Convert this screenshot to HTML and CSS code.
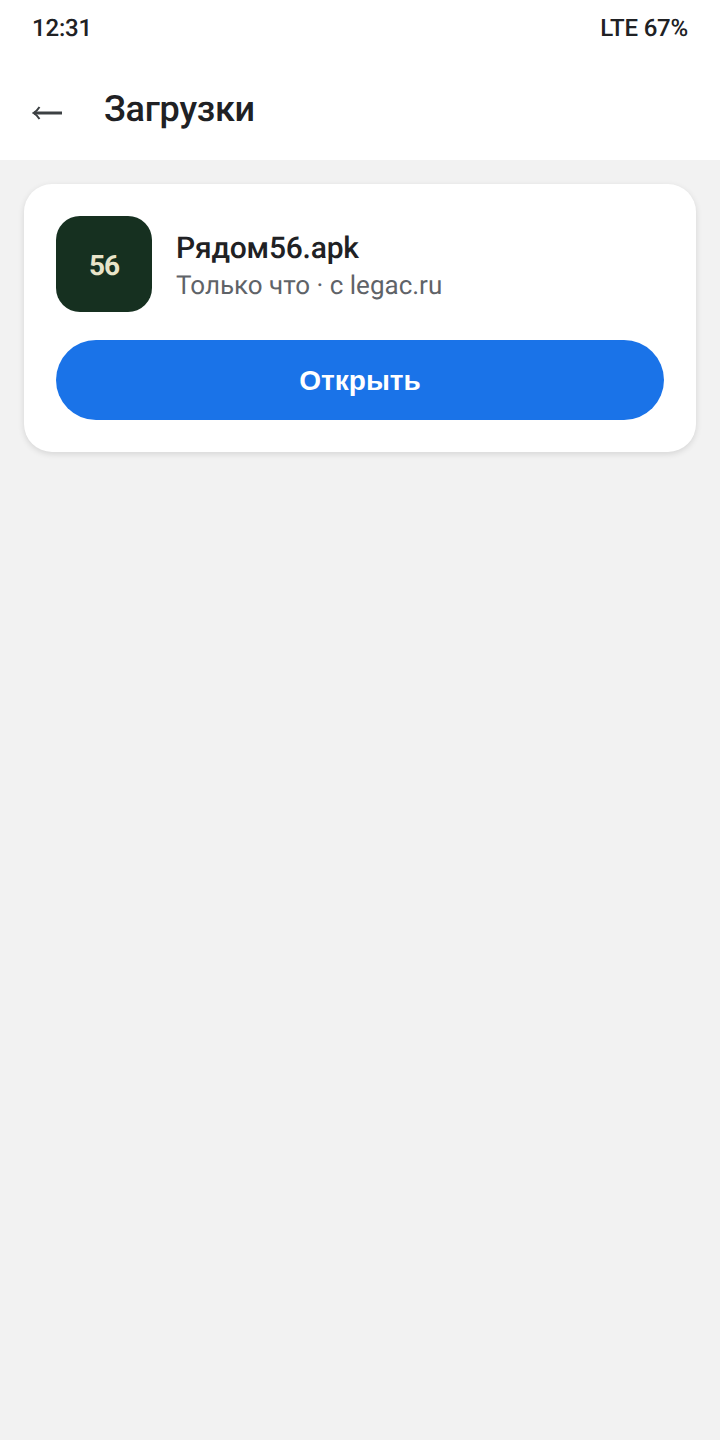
FILE: index.html
```html
<!DOCTYPE html>
<html lang="ru">
<head>
    <meta charset="UTF-8">
    <meta name="viewport" content="width=device-width, initial-scale=1.0">
    <title>Загрузки</title>
    <link rel="stylesheet" href="styles.css">
</head>
<body>

    <!-- Status bar -->
    <div class="status-bar">
        <span>12:31</span>
        <span>LTE 67%</span>
    </div>

    <!-- Header -->
    <div class="header">
        <svg class="back-arrow" width="32" height="16" viewBox="0 0 32 16">
            <path d="M7.5 2 Q5 6 1.5 8 Q5 10 7.5 14" fill="none" stroke="#3c4043" stroke-width="2"/>
            <path d="M2 8 H30" fill="none" stroke="#3c4043" stroke-width="3"/>
        </svg>
        <h1>Загрузки</h1>
    </div>

    <!-- Downloads -->
    <div class="content">
        <div class="card">
            <div class="file-row">
                <div class="app-icon">56</div>
                <div class="file-info">
                    <div class="file-name">Рядом56.apk</div>
                    <div class="file-meta">Только что · с legac.ru</div>
                </div>
            </div>
            <button class="open-btn">Открыть</button>
        </div>
    </div>

</body>
</html>
```

FILE: styles.css
```css
/* General Body Styling */
body {
    font-family: Roboto, sans-serif;
    background-color: #f2f2f2;
    color: #202124;
    margin: 0;
    width: 720px;
    height: 1440px;
    overflow: hidden;
    text-rendering: geometricPrecision;
}

/* Status Bar */
.status-bar {
    display: flex;
    justify-content: space-between;
    align-items: center;
    height: 56px;
    padding: 0 32px;
    background-color: white;
    font-size: 24px;
    font-weight: 500;
    letter-spacing: -0.2px;
}

/* Header */
.header {
    display: flex;
    align-items: center;
    gap: 40px;
    height: 104px;
    padding: 0 32px;
    background-color: white;
}

.back-arrow {
    flex-shrink: 0;
    margin-top: 10px;
}

h1 {
    margin: 2px 0 0;
    font-size: 36px;
    font-weight: 500;
    letter-spacing: -0.25px;
}

/* Card */
.content {
    padding: 24px;
}

.card {
    display: flex;
    flex-direction: column;
    gap: 28px;
    padding: 32px;
    background-color: white;
    border-radius: 28px;
    box-shadow: 0 2px 6px rgba(0, 0, 0, 0.12);
}

.file-row {
    display: flex;
    align-items: center;
    gap: 24px;
}

.app-icon {
    display: flex;
    align-items: center;
    justify-content: center;
    width: 96px;
    height: 96px;
    padding-top: 2px;
    box-sizing: border-box;
    background-color: #163020;
    border-radius: 24px;
    color: #e8e4c9;
    font-size: 28px;
    font-weight: 700;
    letter-spacing: -1px;
}

.file-info {
    padding-top: 4px;
}

.file-name {
    font-size: 30px;
    font-weight: 500;
    letter-spacing: -0.2px;
}

.file-meta {
    margin-top: 5px;
    font-size: 26px;
    color: #5f6368;
}

/* Open Button */
.open-btn {
    height: 80px;
    padding: 2px 0 0;
    background-color: #1a73e8;
    color: white;
    border: none;
    border-radius: 40px;
    font-family: "Liberation Sans", Arial, sans-serif;
    font-size: 28px;
    font-weight: 700;
}
```
